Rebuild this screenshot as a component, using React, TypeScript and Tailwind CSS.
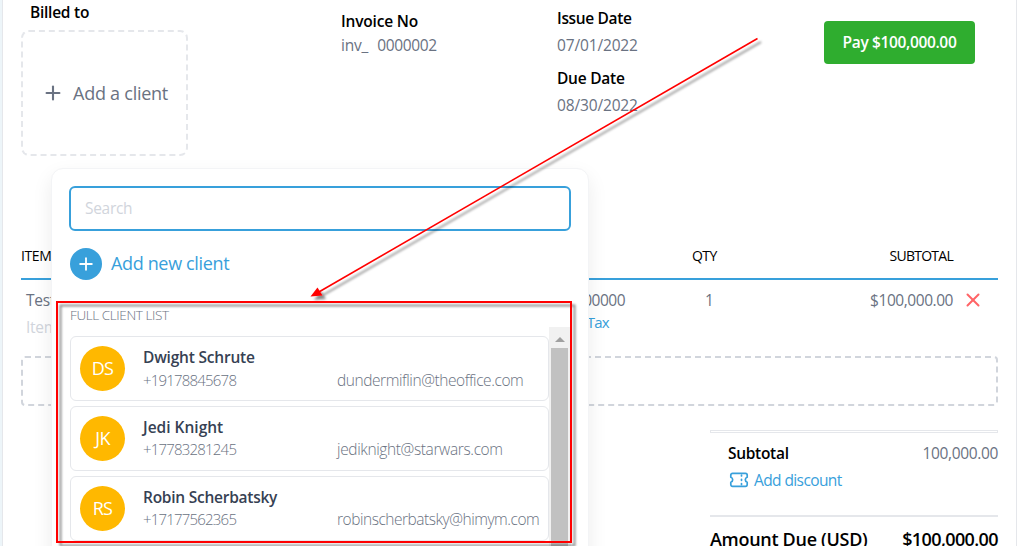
import React from 'react';
import { Plus, X } from 'lucide-react';

interface Client {
  initials: string;
  name: string;
  phone: string;
  email: string;
  nameClass: string;
  emailClass: string;
  rowClass: string;
}

const clients: Client[] = [
  {
    initials: 'DS',
    name: 'Dwight Schrute',
    phone: '+19178845678',
    email: 'dundermiflin@theoffice.com',
    nameClass: 'tracking-[-0.2px]',
    emailClass: 'tracking-[-0.43px]',
    rowClass: 'mt-0',
  },
  {
    initials: 'JK',
    name: 'Jedi Knight',
    phone: '+17783281245',
    email: 'jediknight@starwars.com',
    nameClass: 'tracking-[0px]',
    emailClass: 'tracking-[-0.37px]',
    rowClass: '-mt-px mb-px',
  },
  {
    initials: 'RS',
    name: 'Robin Scherbatsky',
    phone: '+17177562365',
    email: 'robinscherbatsky@himym.com',
    nameClass: 'tracking-[-0.25px]',
    emailClass: 'tracking-[-0.47px]',
    rowClass: '-mt-px mb-px',
  },
];

const ClientCard: React.FC<{ client: Client }> = ({ client }) => (
  <div className="flex h-[65px] w-[479px] shrink-0 items-center rounded-md border border-gray-200 bg-white pl-[9px]">
    <div className="flex size-[45px] items-center justify-center rounded-full bg-[#ffb800] text-[18px] tracking-[-0.8px] text-white">
      {client.initials}
    </div>
    <div className="ml-[18px]">
      <div className={`h-[23px] text-[15.5px] leading-[20px] font-[560] whitespace-nowrap text-gray-700 ${client.nameClass}`}>
        <span>{client.name}</span>
      </div>
      <div className={`flex h-5 text-[15.5px] leading-[20px] font-light whitespace-nowrap text-gray-500 ${client.rowClass}`}>
        <div className="w-[194px] text-[15px]">
          <span className="tracking-[-0.8px]">{client.phone}</span>
        </div>
        <span className={client.emailClass}>{client.email}</span>
      </div>
    </div>
  </div>
);

const ClientPicker: React.FC = () => (
  <div className="absolute top-[168px] left-[51px] h-[400px] w-[538px] rounded-xl border border-gray-100 bg-white pt-[17px] pl-[17px] shadow-[0_8px_20px_rgba(0,0,0,0.08)]">
    <input
      placeholder="Search"
      className="block h-[45px] w-[502px] rounded-md border-2 border-[#38a0db] px-[14px] pb-[2px] text-[15.5px] tracking-[-0.3px] placeholder:text-gray-300"
    />
    <button className="mt-[17px] ml-px flex h-8 items-center text-[#38a0db]">
      <span className="flex size-8 items-center justify-center rounded-full bg-[#38a0db] text-white">
        <Plus className="size-5" strokeWidth={2.2} />
      </span>
      <span className="ml-[9px] pb-px text-[18px] tracking-[-0.35px]">Add new client</span>
    </button>
    <div className="mt-[25px] ml-px h-[22px] text-[13.5px] leading-[20px] font-light text-gray-500">
      <span className="tracking-[-0.4px]">FULL CLIENT LIST</span>
    </div>
    <div className="ml-px flex h-[240px] w-[501px] overflow-hidden">
      <div className="flex flex-col gap-[5px] pt-[9px]">
        {clients.map((client) => (
          <ClientCard key={client.phone} client={client} />
        ))}
      </div>
      <div className="flex w-[22px] flex-col bg-[#f1f1f1] pl-[2px]">
        <div className="flex h-[21px] w-[17px] items-center justify-center pt-[3px]">
          <svg width="10" height="5" viewBox="0 0 10 5">
            <path d="M0 5 5 0 10 5Z" fill="#a0a0a0" />
          </svg>
        </div>
        <div className="w-[17px] flex-1 bg-[#c1c1c1]" />
      </div>
    </div>
  </div>
);

const Header: React.FC = () => (
  <header className="flex h-[240px] text-[15.5px] leading-[20px]">
    <div className="w-[320px] pt-[2px]">
      <div className="h-7 pl-[9px] font-[560]">
        <span className="tracking-[-0.25px]">Billed to</span>
      </div>
      <button className="flex h-[126px] w-[167px] items-center rounded-lg border-2 border-dashed border-gray-200 pl-[19px] text-gray-500">
        <Plus className="size-[22px]" strokeWidth={2.3} />
        <span className="ml-[9px] pb-px text-[18px] tracking-[-0.25px]">Add a client</span>
      </button>
    </div>
    <div className="w-[216px] pt-[11px]">
      <div className="h-6 font-[560]">
        <span className="tracking-[-0.2px]">Invoice No</span>
      </div>
      <div className="flex gap-[9px] text-gray-500">
        <span className="tracking-[-0.2px]">inv_</span>
        <span className="tracking-[-0.35px]">0000002</span>
      </div>
    </div>
    <div className="w-[267px] pt-2">
      <div className="h-[27px] font-[560]">
        <span className="tracking-[-0.35px]">Issue Date</span>
      </div>
      <div className="h-[33px] text-gray-500">
        <span className="tracking-[-0.15px]">07/01/2022</span>
      </div>
      <div className="h-[27px] font-[560]">
        <span className="tracking-[-0.25px]">Due Date</span>
      </div>
      <div className="text-gray-500">
        <span className="tracking-[-0.15px]">08/30/2022</span>
      </div>
    </div>
    <button className="mt-[21px] h-[43px] w-[151px] rounded bg-[#2fad2f] pb-px font-semibold text-white">
      <span className="tracking-[-0.35px]">Pay $100,000.00</span>
    </button>
  </header>
);

const ItemsTable: React.FC = () => (
  <section>
    <div className="flex h-10 border-b-2 border-[#38a0db] pt-[6px] text-[14px] leading-[20px] font-medium">
      <div className="w-[671px]">
        <span className="tracking-[-0.4px]">ITEM</span>
      </div>
      <div className="w-[100px]">
        <span className="tracking-[-0.6px]">QTY</span>
      </div>
      <div className="w-[161px] text-right">
        <span className="tracking-[-0.75px]">SUBTOTAL</span>
      </div>
    </div>
    <div className="flex h-[76px] pt-[10px] text-[15.5px] leading-[20px] text-gray-500">
      <div className="w-[500px] pl-[5px]">
        <div className="h-[27px]">
          <span className="tracking-[-0.3px]">Test</span>
        </div>
        <span className="tracking-[-0.3px] text-gray-300">Item</span>
      </div>
      <div className="w-[104px] text-right">
        <div className="h-[22px]">
          <span className="tracking-[-0.5px]">100000</span>
        </div>
        <div className="pr-4 text-[15px] text-[#38a0db]">
          <span className="tracking-[-0.7px]">Add Tax</span>
        </div>
      </div>
      <div className="w-[167px] pl-[80px]">1</div>
      <div className="w-[161px] text-right">
        <span className="tracking-[-0.45px]">$100,000.00</span>
      </div>
      <X className="-mt-px ml-[9px] size-[22px] text-red-400" strokeWidth={2.2} />
    </div>
    <div className="h-[50px] rounded border-2 border-dashed border-gray-300" />
  </section>
);

const Totals: React.FC = () => (
  <section className="mt-6 ml-auto w-[288px]">
    <div className="h-[3px] border border-gray-200" />
    <div className="flex h-[82px] justify-between pt-[10px] pl-[18px] text-[15.5px] leading-[20px]">
      <div>
        <div className="h-[27px] font-[560]">
          <span className="tracking-[-0.3px]">Subtotal</span>
        </div>
        <button className="flex items-center text-[#38a0db]">
          {/* ticket */}
          <svg className="ml-px" width="20" height="20" viewBox="0 0 20 20" fill="none" stroke="currentColor" strokeWidth="1.7" strokeLinecap="round" strokeLinejoin="round">
            <path d="M3.500 3.300h13a1.700 1.700 0 0 1 1.700 1.700v2.300a2.600 2.600 0 0 0 0 5v2.300a1.700 1.700 0 0 1-1.700 1.700h-13a1.700 1.700 0 0 1-1.700-1.700v-2.300a2.600 2.600 0 0 0 0-5V5a1.700 1.700 0 0 1 1.700-1.700Z" />
            <path d="M12.500 5v1M12.500 9.300v1M12.500 13.600v1" />
          </svg>
          <span className="ml-[5px] tracking-[-0.6px]">Add discount</span>
        </button>
      </div>
      <span className="tracking-[-0.35px] text-gray-500">100,000.00</span>
    </div>
    <div className="flex justify-between border-t-2 border-gray-200 pt-[10px] text-[18px] leading-[24px] font-[560] whitespace-nowrap">
      <span className="tracking-[-0.3px]">Amount Due (USD)</span>
      <span className="tracking-[-0.6px]">$100,000.00</span>
    </div>
  </section>
);

// Highlight frame around the client list and the arrow that leads to it
const Callout: React.FC = () => (
  <svg className="pointer-events-none absolute inset-0" width="1017" height="546" viewBox="0 0 1017 546">
    <defs>
      <filter id="callout-shadow" filterUnits="userSpaceOnUse" x="0" y="0" width="1017" height="600">
        <feDropShadow dx="3.5" dy="3.5" stdDeviation="1.3" floodColor="#000" floodOpacity="0.45" />
      </filter>
    </defs>
    <g filter="url(#callout-shadow)">
      <rect x="57" y="302" width="514" height="240" fill="none" stroke="#f00" strokeWidth="2" />
      <path d="M757.5 38.5 318 292.5" stroke="#f00" strokeWidth="1.6" />
      <path d="M310.500 296.500 317.500 287.500 322.500 295.500Z" fill="#f00" />
    </g>
  </svg>
);

export default function App() {
  return (
    <div className="relative h-[546px] w-[1017px] overflow-hidden bg-[#edf5f9] pl-[2px] font-['Open_Sans','Noto_Sans',sans-serif] text-black">
      <main className="h-full border-x border-gray-200 bg-white pr-[18px] pl-[18px]">
        <Header />
        <ItemsTable />
        <Totals />
      </main>
      <ClientPicker />
      <Callout />
    </div>
  );
}
